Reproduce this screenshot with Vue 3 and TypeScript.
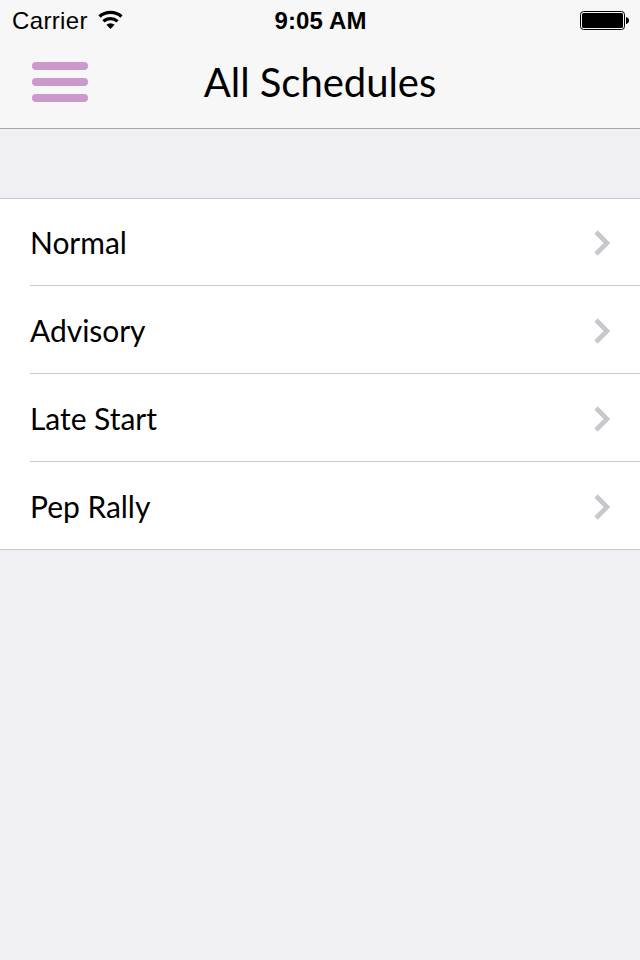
<script setup lang="ts">
const schedules: string[] = ['Normal', 'Advisory', 'Late Start', 'Pep Rally']
</script>

<template>
  <main class="screen">
    <header class="top">
      <div class="status">
        <div class="carrier">
          <span class="name">Carrier</span>
          <svg class="wifi" width="25" height="20" viewBox="0 0 25 20">
            <g fill="none" stroke="#000" stroke-width="3.3">
              <path d="M1.5 6.6a16.6 16.6 0 0 1 22 0" />
              <path d="M5.5 11.4a10.4 10.4 0 0 1 14 0" />
            </g>
            <path d="M8.4 14.8a6.2 6.2 0 0 1 8.2 0L12.5 19z" />
          </svg>
        </div>
        <span class="time">9:05 AM</span>
        <svg class="battery" width="49" height="19" viewBox="0 0 49 19">
          <rect x=".5" y=".5" width="44" height="18" rx="3" fill="none" stroke="#000" />
          <rect x="2" y="2" width="41" height="15" rx="1.5" />
          <path d="M46 6q3 .6 3 3.5t-3 3.5z" />
        </svg>
      </div>
      <nav class="bar">
        <button class="menu" aria-label="Menu"><i></i><i></i><i></i></button>
        <h1>All Schedules</h1>
      </nav>
    </header>
    <ul class="list">
      <li v-for="name in schedules" :key="name" class="row">
        <span>{{ name }}</span>
        <svg width="18" height="26" viewBox="0 0 18 26">
          <path d="M2 2L13 13L2 24" fill="none" stroke="#c7c7cc" stroke-width="4.6" />
        </svg>
      </li>
    </ul>
  </main>
</template>

<style>
body { background: #efeff4; }
</style>

<style scoped>
.screen { width: 640px; height: 960px; overflow: hidden; background: #efeff4; color: #000; font-family: Lato, sans-serif; }
.top { height: 129px; box-sizing: border-box; background: #f7f7f7; border-bottom: 1px solid #a7a7aa; }
.status { height: 40px; display: grid; grid-template-columns: 1fr auto 1fr; align-items: center; padding: 0 11px 0 12px; font: 24px/38px "Liberation Sans", sans-serif; }
.carrier { display: flex; align-items: center; gap: 10px; }
.name { padding-top: 2px; letter-spacing: .35px; }
.time { padding-top: 2px; font-weight: 700; letter-spacing: .15px; }
.battery { justify-self: end; }
.bar { height: 88px; display: grid; grid-template-columns: 88px 1fr 88px; align-items: center; }
.menu { width: 56px; padding: 0; margin: 0 0 4px 32px; border: 0; background: none; display: flex; flex-direction: column; gap: 8px; }
.menu i { height: 8px; border-radius: 4px; background: #cc99cc; }
h1 { margin: 0 0 4px; text-align: center; font-size: 40px; font-weight: 400; line-height: 48px; letter-spacing: -.03px; }
.list { list-style: none; margin: 69px 0 0; padding: 0 0 0 30px; background: #fff; border-top: 1px solid #c8c7cc; border-bottom: 1px solid #c8c7cc; }
.row { height: 88px; box-sizing: border-box; padding-right: 28px; display: flex; align-items: center; justify-content: space-between; font-size: 30px; letter-spacing: -.04px; border-bottom: 1px solid #c8c7cc; }
.row svg { margin-top: 2px; }
.row:first-child { height: 87px; }
.row:first-child svg { margin-top: 1px; }
.row:last-child { height: 87px; border: 0; }
</style>
